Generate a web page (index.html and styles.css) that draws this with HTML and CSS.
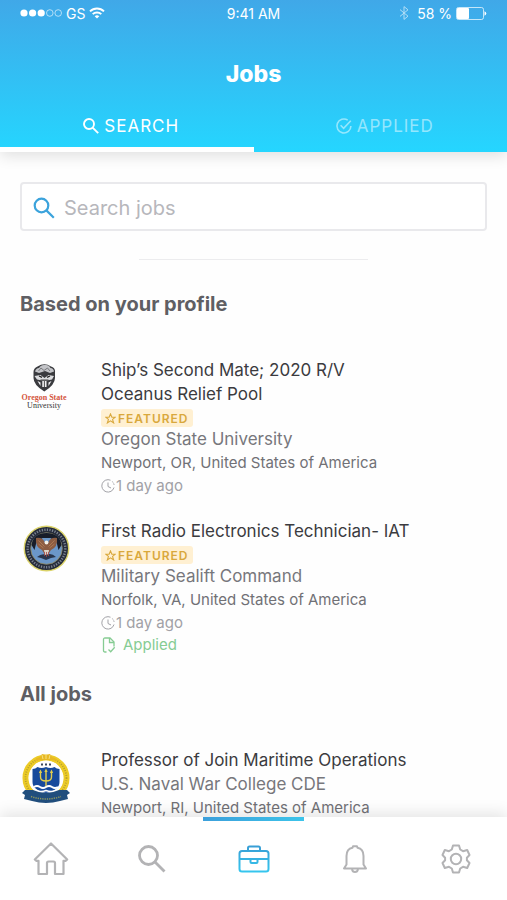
FILE: index.html
```html
<!DOCTYPE html>
<html lang="en">
<head>
    <meta charset="UTF-8">
    <meta name="viewport" content="width=device-width, initial-scale=1.0">
    <title>Jobs</title>
    <link rel="stylesheet" href="styles.css">
</head>
<body>
    <!-- Header -->
    <header class="header">
        <div class="status-bar">
            <div class="status-left">
                <svg width="42" height="10" viewBox="0 0 42 10" fill="#fff">
                    <circle cx="4" cy="5" r="3.6"/>
                    <circle cx="12.6" cy="5" r="3.6"/>
                    <circle cx="21.2" cy="5" r="3.6"/>
                    <circle cx="29.8" cy="5" r="3.3" fill="none" stroke="#fff" stroke-width="0.8" opacity="0.75"/>
                    <circle cx="38.2" cy="5" r="3.3" fill="none" stroke="#fff" stroke-width="0.8" opacity="0.75"/>
                </svg>
                <span>GS</span>
                <svg width="16" height="12" viewBox="0 0 16 12" fill="none" stroke="#fff" stroke-width="1.9">
                    <path d="M1 4.4a10 10 0 0 1 14 0"/>
                    <path d="M3.7 7.2a6.1 6.1 0 0 1 8.6 0"/>
                    <path d="M8 11.6L5.7 9.3a3.3 3.3 0 0 1 4.6 0z" fill="#fff" stroke="none"/>
                </svg>
            </div>
            <span class="status-time">9:41 AM</span>
            <div class="status-right">
                <svg class="bluetooth" width="10" height="14" viewBox="0 0 10 14" fill="none" stroke="#fff" stroke-width="1">
                    <path d="M1 3.6l8 6.6L5 13.4V.6l4 3.2-8 6.6"/>
                </svg>
                <span>58 %</span>
                <svg width="31" height="13" viewBox="0 0 31 13">
                    <rect x="0.5" y="0.5" width="27" height="12" rx="2" fill="none" stroke="#fff" opacity="0.7"/>
                    <rect x="1" y="1" width="12" height="11" rx="1" fill="#fff"/>
                    <path d="M28.5 4.2q1.8.8 1.8 2.3t-1.8 2.3z" fill="#fff"/>
                </svg>
            </div>
        </div>
        <h1 class="page-title">Jobs</h1>
        <div class="tabs">
            <button class="tab active">
                <svg width="18" height="18" viewBox="0 0 18 18" fill="none" stroke="currentColor" stroke-width="1.9">
                    <circle cx="7" cy="7" r="5"/>
                    <path d="M10.6 10.6l5.6 5.6"/>
                </svg>
                <span>SEARCH</span>
            </button>
            <button class="tab">
                <svg width="18" height="18" viewBox="0 0 18 18" fill="none" stroke="currentColor" stroke-width="1.6">
                    <path d="M12.7 3.1A7 7 0 1 0 15.9 9"/>
                    <path d="M5.6 8.3l3 3 7.2-7.6"/>
                </svg>
                <span>APPLIED</span>
            </button>
        </div>
    </header>

    <main class="content">
        <!-- Search box -->
        <label class="search-box">
            <svg width="22" height="22" viewBox="0 0 22 22" fill="none" stroke="#3ba3dc" stroke-width="2.2">
                <circle cx="8.5" cy="8.5" r="6.8"/>
                <path d="M13.4 13.4l7.4 7.4"/>
            </svg>
            <input type="search" placeholder="Search jobs" aria-label="Search jobs">
        </label>
        <hr class="divider">

        <!-- Recommended jobs -->
        <section class="job-section">
            <h2>Based on your profile</h2>
            <article class="job">
                <svg class="job-logo" viewBox="0 0 50 50">
                    <path d="M13.500 9q0-4 4-5.500Q24.500-1 31 3.500q4.500 1.500 4 5.500v6q0 7-10.700 13.500Q13.500 22 13.500 15z" fill="#3a3b3f"/>
                    <path d="M15 8.500q1-3.500 4-3.500 2-3.500 6-3 4-.500 5.500 3 3 0 3.500 3.500l-4 1.500-5-2-6 2z" fill="#c3c4c8"/>
                    <path d="M18.500 8l2.500-3 3 2.500L27.500 5l2.500 3" fill="none" stroke="#66676b" stroke-width="0.8"/>
                    <path d="M14.500 13l6-1 4 3 4-3 5.500 1-2 3.500-5 1h-5l-5-1z" fill="#dcdde0"/>
                    <path d="M19 13l3 1.300M30 13l-3 1.300" stroke="#222" stroke-width="1.3"/>
                    <path d="M17.500 18l3 1.500v3.500zM31.500 18l-3 1.500v3.500zM22.300 18h4.200v6h-4.200z" fill="#f2f2f4"/>
                    <path d="M24.400 18v6M20.500 17h8" stroke="#222" stroke-width="0.8"/>
                    <text x="24" y="37" text-anchor="middle" class="logo-state">Oregon State</text>
                    <text x="24" y="45" text-anchor="middle" class="logo-univ">University</text>
                </svg>
                <div class="job-info">
                    <h3>Ship’s Second Mate; 2020 R/V<br>Oceanus Relief Pool</h3>
                    <span class="badge">
                        <svg width="11" height="11" viewBox="0 0 24 24" fill="none" stroke="currentColor" stroke-width="2.4">
                            <path d="M12 2l3 7.200h7.500l-6 4.800 2.300 7.600L12 17l-6.800 4.600L7.500 14l-6-4.800H9z"/>
                        </svg>
                        <span>FEATURED</span>
                    </span>
                    <p class="company">Oregon State University</p>
                    <p class="location">Newport, OR, United States of America</p>
                    <p class="posted">
                        <svg width="14" height="14" viewBox="0 0 14 14" fill="none" stroke="currentColor" stroke-width="1">
                            <path d="M9.500 1.200A6.200 6.200 0 1 0 13 8.500"/>
                            <path d="M11 2.300A6.200 6.200 0 0 1 13.200 7" stroke-dasharray="1.500 1.200"/>
                            <path d="M7 3.500V7.500l3 1.500"/>
                        </svg>
                        <span>1 day ago</span>
                    </p>
                </div>
            </article>
            <article class="job">
                <svg class="job-logo" viewBox="0 0 50 50">
                    <circle cx="26.500" cy="24.500" r="22.200" fill="#262c3b" stroke="#dbd36a" stroke-width="1.400"/>
                    <circle cx="26.500" cy="24.500" r="18.800" fill="none" stroke="#7c8492" stroke-width="2.400" stroke-dasharray="1.200 1.400"/>
                    <circle cx="26.500" cy="24.500" r="15.800" fill="#6b97c9" stroke="#8f875c" stroke-width="0.800"/>
                    <path d="M11.500 21q2-12 15-12t15 12l-3 5-2-8-6-4h-8l-6 4-2 8z" fill="#171d2a"/>
                    <path d="M16 14q7-1 9 5h3q2-6 9-5 1 9-6 12l-2 3h-5l-2-3q-7-3-6-12z" fill="#8c5c42"/>
                    <path d="M18.500 16.500l6 6M18.500 20l5 4M34.500 16.500l-6 6M34.500 20l-5 4" stroke="#b17d56" stroke-width="0.900"/>
                    <circle cx="26.500" cy="18.500" r="1.900" fill="#f5f1e7"/>
                    <path d="M24 26h5l-1 6h-3z" fill="#ddd4c7"/>
                    <path d="M17 33q5-4 9-2 5-3 10 2l-5 1-5 2-5-2z" fill="#29364d"/>
                    <path d="M24.500 28v4M26.500 28v5M28.500 28v4" stroke="#a34842" stroke-width="0.800"/>
                </svg>
                <div class="job-info">
                    <h3>First Radio Electronics Technician- IAT</h3>
                    <span class="badge">
                        <svg width="11" height="11" viewBox="0 0 24 24" fill="none" stroke="currentColor" stroke-width="2.4">
                            <path d="M12 2l3 7.200h7.500l-6 4.800 2.300 7.600L12 17l-6.800 4.600L7.500 14l-6-4.800H9z"/>
                        </svg>
                        <span>FEATURED</span>
                    </span>
                    <p class="company">Military Sealift Command</p>
                    <p class="location">Norfolk, VA, United States of America</p>
                    <p class="posted">
                        <svg width="14" height="14" viewBox="0 0 14 14" fill="none" stroke="currentColor" stroke-width="1">
                            <path d="M9.500 1.200A6.200 6.200 0 1 0 13 8.500"/>
                            <path d="M11 2.300A6.200 6.200 0 0 1 13.200 7" stroke-dasharray="1.500 1.200"/>
                            <path d="M7 3.500V7.500l3 1.500"/>
                        </svg>
                        <span>1 day ago</span>
                    </p>
                    <p class="applied">
                        <svg width="16" height="16" viewBox="0 0 16 16" fill="none" stroke="currentColor" stroke-width="1.300">
                            <path d="M5.500 15H4q-1.500 0-1.500-1.500V2.500Q2.500 1 4 1h5l4 4v4.500"/>
                            <path d="M8.500 1v4.500H13"/>
                            <path d="M7.500 12.500l2.200 2.200 4-4.400"/>
                        </svg>
                        <span>Applied</span>
                    </p>
                </div>
            </article>
        </section>

        <!-- All jobs -->
        <section class="job-section">
            <h2>All jobs</h2>
            <article class="job">
                <svg class="job-logo" viewBox="0 0 50 50">
                    <circle cx="26" cy="25" r="20.500" fill="none" stroke="#eccb27" stroke-width="6"/>
                    <circle cx="26" cy="25" r="20.500" fill="none" stroke="#b39d2c" stroke-width="1.800" stroke-dasharray="0.900 1.500"/>
                    <circle cx="26" cy="25" r="17.300" fill="#fff"/>
                    <path d="M15 8q0-3 5-4l2-3 4 1 4-1 2 3q5 1 5 4l-6-1H21z" fill="#e8b923"/>
                    <path d="M22 2l1 4M26 2v4M30 2l-1 4" stroke="#f6e083"/>
                    <path d="M22 10.500v2M26 10.500v2M30 10.500v2" stroke="#26344d" stroke-width="1.800"/>
                    <path d="M12.500 16q3 0 5-2 4 2 8.500 0 4.500 2 8.500 0 2 2 5 2v13q0 8-13.500 11-13.500-3-13.500-11z" fill="#174a9c"/>
                    <path d="M20.500 19v5q0 4 5.500 4t5.500-4v-5M26 17v17M19.500 20l1-2 1 2M25 19l1-2 1 2M30.500 20l1-2 1 2" fill="none" stroke="#e2cd4e" stroke-width="1.400"/>
                    <path d="M14 34q3-2 6 0t6 0 6 0 6 0" fill="none" stroke="#fff" stroke-width="1.800"/>
                    <path d="M16 37.500q5 2 10 0 5 2 10 0" fill="none" stroke="#fff" stroke-width="1.400"/>
                    <path d="M2 40l3-3h8q13 6 26 0h8l3 3-3 2 1 4-8 2q-14 4-28 0l-8-2 1-4z" fill="#214e7d"/>
                    <path d="M11 43.500q15 5 30 0" fill="none" stroke="#8e965f" stroke-width="1.500" stroke-dasharray="1.300 1"/>
                </svg>
                <div class="job-info">
                    <h3>Professor of Join Maritime Operations</h3>
                    <p class="company">U.S. Naval War College CDE</p>
                    <p class="location">Newport, RI, United States of America</p>
                </div>
            </article>
        </section>
    </main>

    <!-- Bottom navigation -->
    <nav class="bottom-nav">
        <a href="#" class="nav-item" aria-label="Home">
            <svg width="36" height="36" viewBox="0 0 36 36" fill="none" stroke="currentColor" stroke-width="2.200" stroke-linejoin="round">
                <path d="M18 2.500L1.800 18.500l1.400 1.300H5.500V33H14V22q0-1.500 1.500-1.500h5q1.500 0 1.500 1.500v11h8.500V19.800h2.300l1.400-1.300z"/>
            </svg>
        </a>
        <a href="#" class="nav-item" aria-label="Search">
            <svg width="30" height="30" viewBox="0 0 30 30" fill="none" stroke="currentColor" stroke-width="2.800">
                <circle cx="11.500" cy="11.500" r="9"/>
                <path d="M18 18l9.500 9.500"/>
            </svg>
        </a>
        <a href="#" class="nav-item active" aria-label="Jobs">
            <svg width="34" height="30" viewBox="0 0 34 30" fill="none" stroke="url(#navBlue)" stroke-width="2" stroke-linejoin="round">
                <defs>
                    <linearGradient id="navBlue" gradientUnits="userSpaceOnUse" x1="0" y1="0" x2="0" y2="30">
                        <stop offset="0" stop-color="#399bd3"/>
                        <stop offset="1" stop-color="#35c9f0"/>
                    </linearGradient>
                </defs>
                <rect x="2.500" y="7" width="29" height="20.500" rx="2.500"/>
                <path d="M11 7V4q0-1.500 1.500-1.500h9Q23 2.500 23 4v3"/>
                <path d="M2.500 15h11v3q0 1 1 1h5q1 0 1-1v-3h11M13.500 15h7"/>
            </svg>
        </a>
        <a href="#" class="nav-item" aria-label="Notifications">
            <svg width="26" height="30" viewBox="0 0 26 30" fill="none" stroke="currentColor" stroke-width="2" stroke-linejoin="round">
                <path d="M2 24.500h22l-2.500-4v-8.500q0-7-6-8.200L15 2.200h-4l-.500 1.600q-6 1.200-6 8.200v8.500z"/>
                <path d="M10 25q.500 3 3 3t3-3"/>
            </svg>
        </a>
        <a href="#" class="nav-item" aria-label="Settings">
            <svg width="30" height="32" viewBox="0 0 30 32" fill="none" stroke="currentColor" stroke-width="2" stroke-linejoin="round">
                <path d="M12 2.500h6l1.200 4 2.800 1.700 4.200-1.200 2.300 5-2.600 2.700v2.600l2.600 2.700-2.300 5-4.200-1.200-2.800 1.700-1.200 4h-6l-1.200-4L8 23.800 3.800 25l-2.300-5 2.600-2.700v-2.600L1.500 12l2.300-5L8 8.200l2.800-1.700z"/>
                <circle cx="15" cy="16" r="5.200"/>
            </svg>
        </a>
    </nav>
</body>
</html>
```

FILE: styles.css
```css
* {
    box-sizing: border-box;
}
body {
    font-family: Inter, "Liberation Sans", sans-serif;
    background-color: #fefefe;
    color: #3b3b3f;
    margin: 0;
    height: 100vh;
    display: flex;
    flex-direction: column;
}
h1, h2, h3, p {
    margin: 0;
}
svg {
    display: block;
    flex-shrink: 0;
}

/* Header */
.header {
    background: linear-gradient(#40a8e8, #25d6ff);
    color: white;
    box-shadow: 0 4px 14px rgba(0, 0, 0, 0.12);
    z-index: 1;
}
.status-bar {
    display: grid;
    grid-template-columns: 1fr auto 1fr;
    align-items: center;
    height: 26px;
    padding: 0 20px;
    font-size: 14px;
}
.status-left,
.status-right {
    display: flex;
    align-items: center;
    gap: 4px;
}
.status-right {
    justify-content: flex-end;
}
.bluetooth {
    opacity: 0.6;
    margin-right: 4px;
}
.page-title {
    font-size: 23px;
    font-weight: 800;
    line-height: 32px;
    padding: 32px 0 10px;
    text-align: center;
}
.tabs {
    display: flex;
}
.tab {
    flex: 1;
    display: flex;
    align-items: center;
    justify-content: center;
    gap: 4px;
    height: 52px;
    padding: 4px 10px 0 18px;
    background: none;
    border: none;
    border-bottom: 5px solid transparent;
    color: rgba(255, 255, 255, 0.5);
    font-family: inherit;
    font-size: 17px;
    letter-spacing: 1px;
    cursor: pointer;
}
.tab.active {
    color: white;
    border-bottom-color: white;
}

/* Search */
.content {
    flex: 1;
    min-height: 0;
    overflow-y: auto;
    scrollbar-width: none;
    padding: 30px 20px 0;
}
.search-box {
    display: flex;
    align-items: center;
    gap: 9px;
    height: 49px;
    padding: 2px 11px 0;
    border: 2px solid #e9e9ec;
    border-radius: 4px;
    background: white;
}
.search-box input {
    flex: 1;
    min-width: 0;
    border: none;
    outline: none;
    background: none;
    padding: 0;
    font-family: inherit;
    font-size: 20px;
    color: #3b3b3f;
}
.search-box input::placeholder {
    color: #b7b7bc;
}
.divider {
    width: 49%;
    margin: 28px auto 0;
    border: none;
    border-top: 1px solid #ececee;
}

/* Jobs */
.job-section {
    padding-top: 26px;
}
.divider + .job-section {
    padding-top: 32px;
}
.job-section h2 {
    font-size: 20px;
    font-weight: 700;
    line-height: 24px;
    color: #5f5f64;
    margin-bottom: 42px;
}
.job {
    display: flex;
    align-items: flex-start;
    gap: 31px;
}
.job + .job {
    margin-top: 22px;
}
.job-logo {
    width: 50px;
    height: 50px;
    margin-top: 5px;
}
.logo-state,
.logo-univ {
    font-family: "Liberation Serif", serif;
    font-size: 8px;
    font-weight: bold;
    fill: #d4553c;
}
.logo-univ {
    font-weight: normal;
    fill: #333;
}
.job-info {
    flex: 1;
}
.job-info h3 {
    font-size: 17px;
    font-weight: 400;
    line-height: 24px;
}
.badge {
    display: flex;
    align-items: center;
    gap: 2px;
    width: fit-content;
    height: 18px;
    margin-top: 3px;
    padding: 0 4px;
    border-radius: 3px;
    background: #fff0d2;
    color: #d9a83c;
    font-size: 12px;
    font-weight: 600;
    letter-spacing: 1px;
}
.company {
    font-size: 17px;
    line-height: 24px;
    color: #77777c;
}
.location {
    font-size: 15px;
    line-height: 24px;
    color: #717176;
}
.posted,
.applied {
    display: flex;
    align-items: center;
    gap: 1px;
    font-size: 15px;
    line-height: 22px;
    color: #a1a1a6;
}
.applied {
    gap: 6px;
    color: #86cc93;
}

/* Bottom navigation */
.bottom-nav {
    display: flex;
    height: 83px;
    background: white;
    box-shadow: 0 -4px 14px rgba(0, 0, 0, 0.1);
    z-index: 1;
}
.nav-item {
    flex: 1;
    display: flex;
    align-items: center;
    justify-content: center;
    padding-bottom: 4px;
    border-top: 4px solid transparent;
    color: #b3b3b5;
}
.nav-item.active {
    border-image: linear-gradient(90deg, #3c9fdb, #3cc4ea) 1;
    border-image-width: 4px 0 0;
}
```
